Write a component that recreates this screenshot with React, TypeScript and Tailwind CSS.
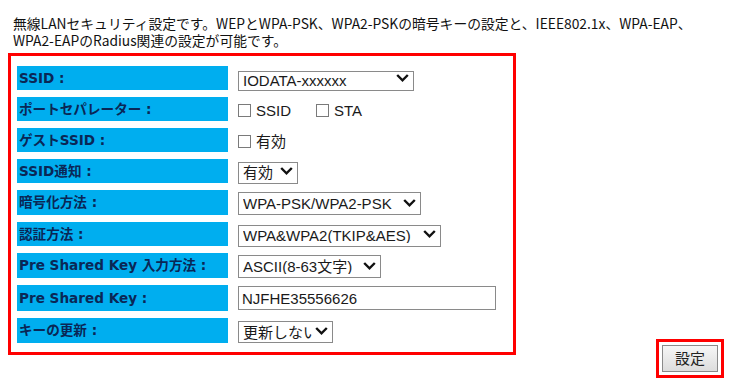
import React from "react";

const labelFont = { fontFamily: '"DejaVu Sans", "Noto Sans CJK JP", sans-serif' };

function Chevron() {
  return (
    <svg
      className="pointer-events-none absolute right-[5px] top-1/2 -translate-y-1/2"
      width="13"
      height="9"
      viewBox="0 0 13 9"
    >
      <path d="M1.2 1.5 L6.5 6.8 L11.8 1.5" fill="none" stroke="#111" strokeWidth="2.4" />
    </svg>
  );
}

function Select({ value, w, h }: { value: string; w: number; h: number }) {
  return (
    <div className="relative" style={{ width: w, height: h }}>
      <select
        className="h-full w-full appearance-none border border-[#8a8a8a] bg-white pl-[4px] pr-[20px] text-[15px] leading-none text-[#1a1a1a] outline-none"
        style={{ fontFamily: '"Liberation Sans", "Noto Sans CJK JP", sans-serif' }}
        defaultValue={value}
      >
        <option>{value}</option>
      </select>
      <Chevron />
    </div>
  );
}

function Check({ label }: { label: string }) {
  return (
    <label className="flex items-center gap-[5px]">
      <input
        type="checkbox"
        className="m-0 h-[13px] w-[13px] appearance-none border border-[#7a7a7a] bg-white"
      />
      <span
        className="text-[15px] leading-none text-[#1a1a1a]"
        style={{ fontFamily: '"Liberation Sans", "Noto Sans CJK JP", sans-serif' }}
      >
        {label}
      </span>
    </label>
  );
}

type Row = { label: string; h: number; content: React.ReactNode };

const rows: Row[] = [
  { label: "SSID :", h: 24, content: <Select value="IODATA-xxxxxx" w={176} h={20} /> },
  {
    label: "ポートセパレーター :",
    h: 24,
    content: (
      <div className="flex items-center gap-[25px] pt-[2px]">
        <Check label="SSID" />
        <Check label="STA" />
      </div>
    ),
  },
  {
    label: "ゲストSSID :",
    h: 24,
    content: (
      <div className="pt-[2px]">
        <Check label="有効" />
      </div>
    ),
  },
  { label: "SSID通知 :", h: 24, content: <Select value="有効" w={60} h={22} /> },
  { label: "暗号化方法 :", h: 25, content: <Select value="WPA-PSK/WPA2-PSK" w={183} h={23} /> },
  { label: "認証方法 :", h: 24, content: <Select value="WPA&WPA2(TKIP&AES)" w={203} h={22} /> },
  { label: "Pre Shared Key 入力方法 :", h: 25, content: <Select value="ASCII(8-63文字)" w={143} h={23} /> },
  {
    label: "Pre Shared Key :",
    h: 26,
    content: (
      <input
        type="text"
        defaultValue="NJFHE35556626"
        className="h-[24px] w-[258px] border border-[#8a8a8a] bg-white px-[3px] text-[15px] leading-none text-[#1a1a1a] outline-none"
        style={{ fontFamily: '"Liberation Sans", sans-serif' }}
      />
    ),
  },
  { label: "キーの更新 :", h: 25, content: <Select value="更新しない" w={95} h={22} /> },
];

export default function App() {
  return (
    <div className="h-[384px] w-[734px] overflow-hidden bg-white">
      <div
        className="pl-[13px] pt-[15px] text-[13.8px] leading-[17px] text-[#111]"
        style={{ fontFamily: '"Noto Sans CJK JP", "DejaVu Sans", sans-serif' }}
      >
        <div className="h-[17px]">
          無線LANセキュリティ設定です。WEPとWPA-PSK、WPA2-PSKの暗号キーの設定と、IEEE802.1x、WPA-EAP、
        </div>
        <div className="h-[17px]">WPA2-EAPのRadius関連の設定が可能です。</div>
      </div>
      <div className="mt-[4px] flex items-start justify-between pl-[8px] pr-[10px]">
        <div className="w-[508px] border-[3px] border-[#ff0000] pb-[9px] pl-[6px] pt-[10px]">
          <div className="flex flex-col gap-[7px]">
            {rows.map((r) => (
              <div key={r.label} className="flex items-center" style={{ height: r.h }}>
                <div
                  className="flex h-full w-[211px] items-center bg-[#00aeef] pl-[2px] text-[13.6px] font-bold text-[#0a2756]"
                  style={labelFont}
                >
                  {r.label}
                </div>
                <div className="ml-[10px] flex items-center">{r.content}</div>
              </div>
            ))}
          </div>
        </div>
        <div className="mt-[286px] border-[3px] border-[#ff0000] p-[3px]">
          <button
            className="h-[27px] w-[56px] border border-[#8a8a8a] bg-gradient-to-b from-[#f6f6f6] to-[#dddddd] text-[15px] text-[#222]"
            style={{ fontFamily: '"Noto Sans CJK JP", sans-serif' }}
          >
            設定
          </button>
        </div>
      </div>
    </div>
  );
}
